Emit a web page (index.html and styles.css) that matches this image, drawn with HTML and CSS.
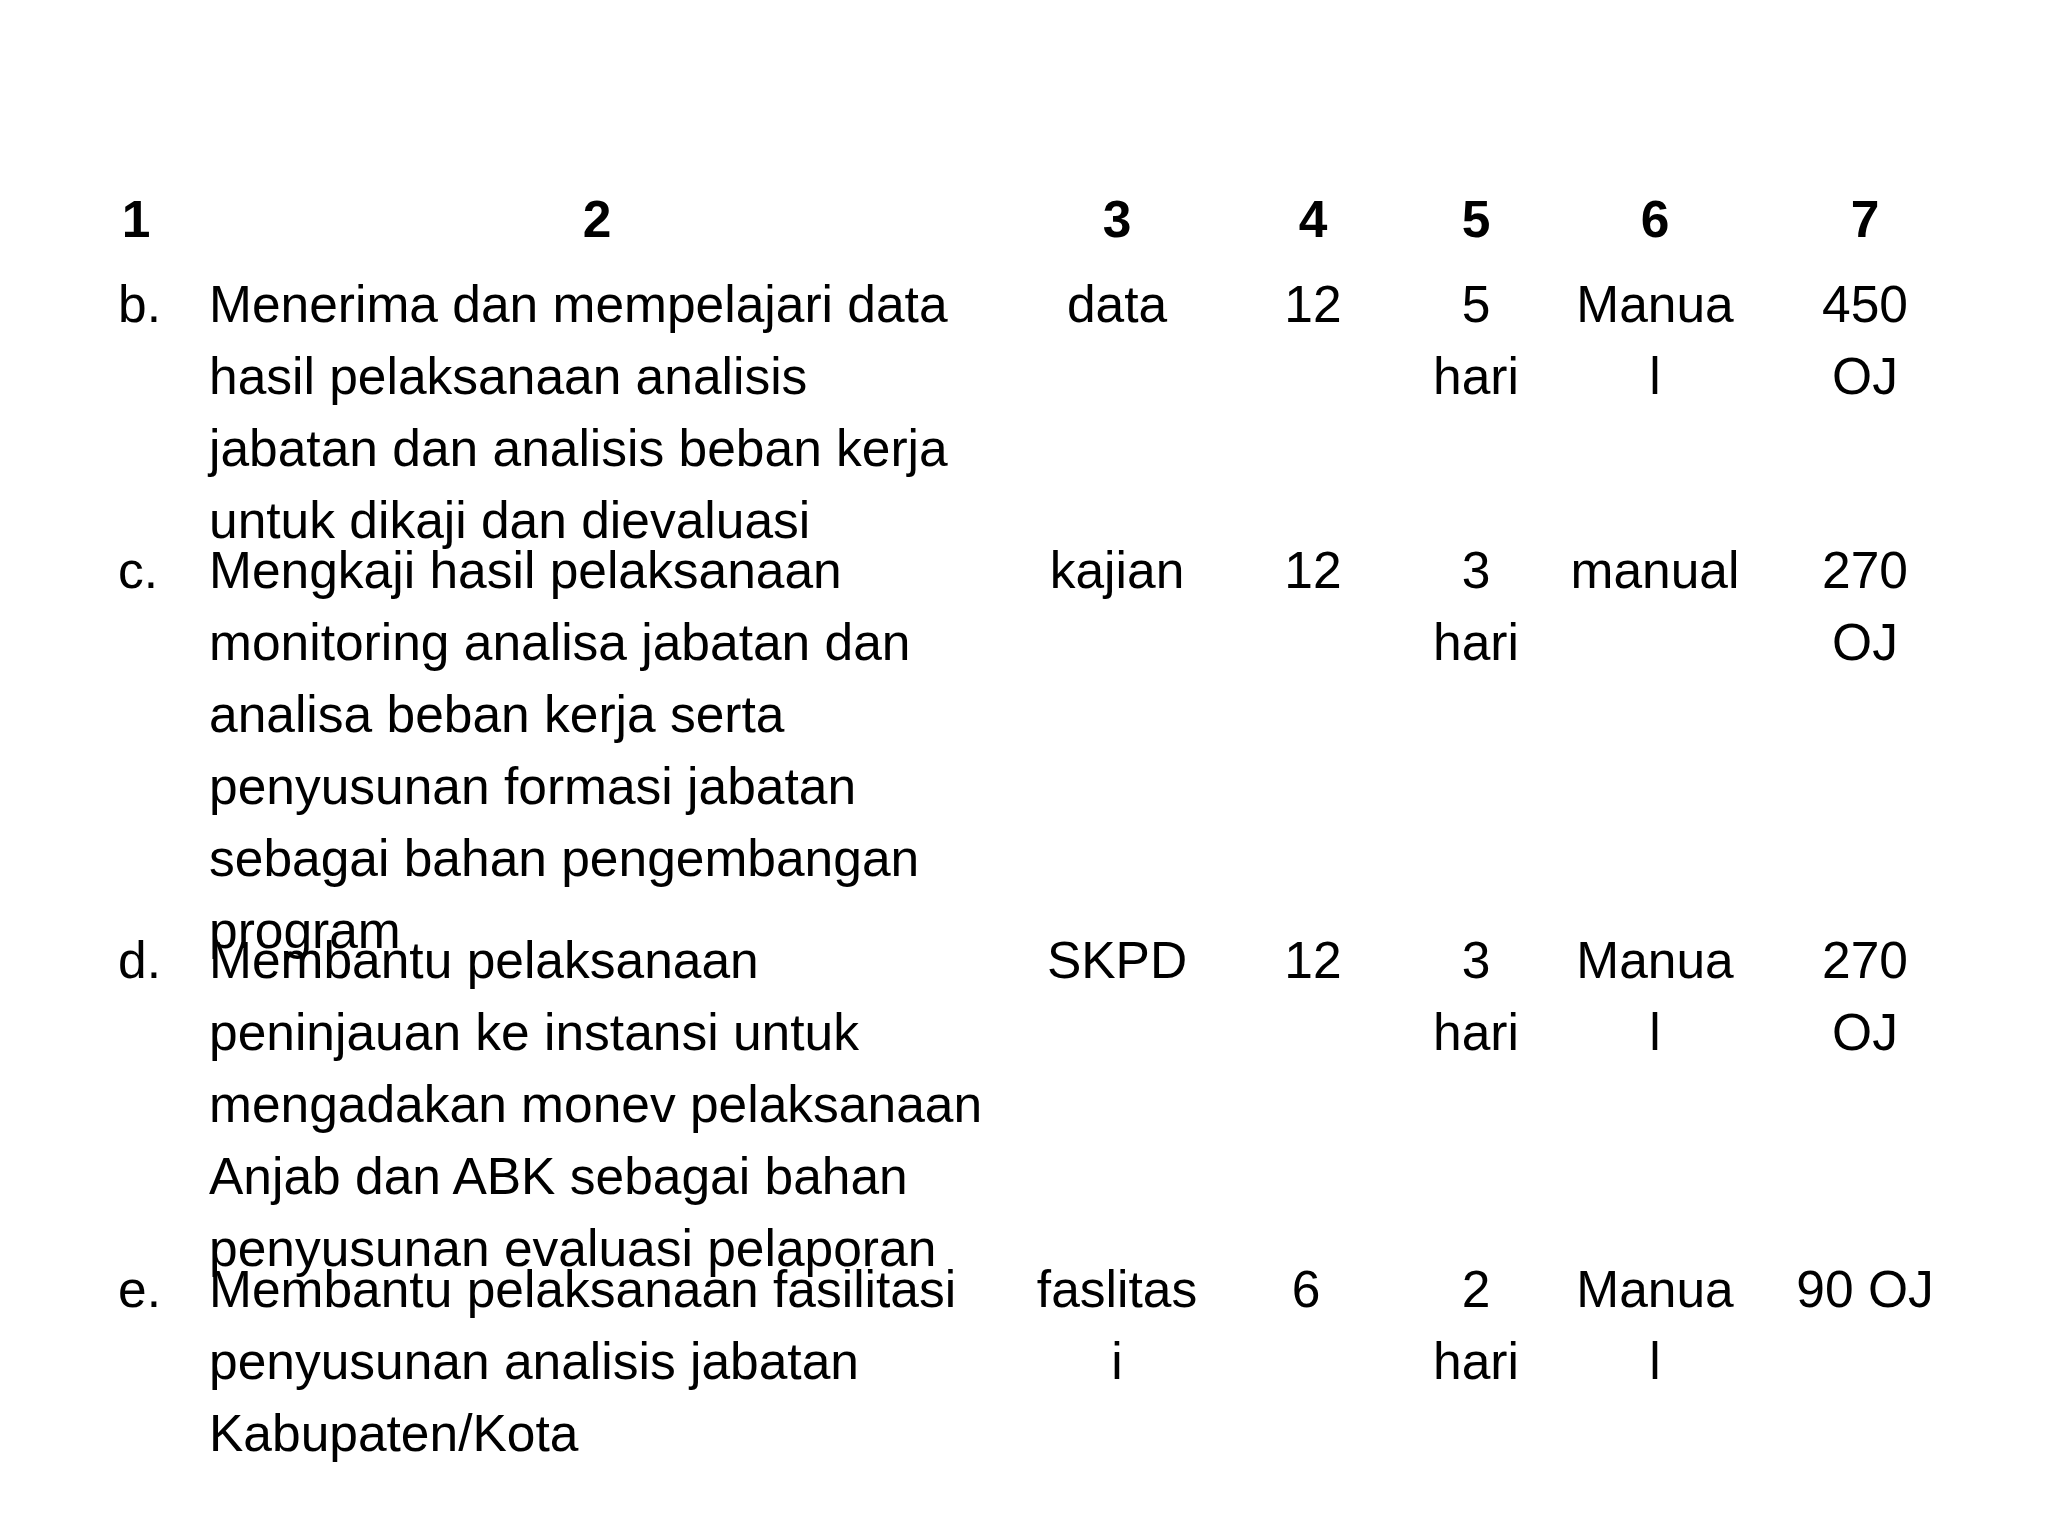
FILE: index.html
```html
<!DOCTYPE html>
<html lang="id">
<head>
<meta charset="utf-8">
<title>Tabel Kegiatan</title>
<link rel="stylesheet" href="styles.css">
</head>
<body>
<main class="slide">
  <div class="grid">
    <div class="cell head">1</div>
    <div class="cell head">2</div>
    <div class="cell head">3</div>
    <div class="cell head">4</div>
    <div class="cell head">5</div>
    <div class="cell head">6</div>
    <div class="cell head">7</div>

    <div class="cell label">b.</div>
    <div class="cell desc">Menerima dan mempelajari data<br>hasil pelaksanaan analisis<br>jabatan dan analisis beban kerja<br>untuk dikaji dan dievaluasi</div>
    <div class="cell c">data</div>
    <div class="cell c">12</div>
    <div class="cell c">5<br>hari</div>
    <div class="cell c">Manua<br>l</div>
    <div class="cell c">450<br>OJ</div>

    <div class="cell label">c.</div>
    <div class="cell desc">Mengkaji hasil pelaksanaan<br>monitoring analisa jabatan dan<br>analisa beban kerja serta<br>penyusunan formasi jabatan<br>sebagai bahan pengembangan<br>program</div>
    <div class="cell c">kajian</div>
    <div class="cell c">12</div>
    <div class="cell c">3<br>hari</div>
    <div class="cell c">manual</div>
    <div class="cell c">270<br>OJ</div>

    <div class="cell label">d.</div>
    <div class="cell desc">Membantu pelaksanaan<br>peninjauan ke instansi untuk<br>mengadakan monev pelaksanaan<br>Anjab dan ABK sebagai bahan<br>penyusunan evaluasi pelaporan</div>
    <div class="cell c">SKPD</div>
    <div class="cell c">12</div>
    <div class="cell c">3<br>hari</div>
    <div class="cell c">Manua<br>l</div>
    <div class="cell c">270<br>OJ</div>

    <div class="cell label">e.</div>
    <div class="cell desc">Membantu pelaksanaan fasilitasi<br>penyusunan analisis jabatan<br>Kabupaten/Kota</div>
    <div class="cell c">faslitas<br>i</div>
    <div class="cell c six">6</div>
    <div class="cell c">2<br>hari</div>
    <div class="cell c">Manua<br>l</div>
    <div class="cell c">90 OJ</div>
  </div>
</main>
</body>
</html>
```
FILE: styles.css
```css
html, body {
  margin: 0;
  padding: 0;
  background: #ffffff;
}

body {
  width: 2048px;
  height: 1536px;
  overflow: hidden;
  color: #000000;
  font-family: "Liberation Sans", Arial, sans-serif;
}

.slide {
  padding: 183px 0 0 100px;
}

.grid {
  display: grid;
  grid-template-columns: 72px 850px 190px 202px 124px 234px 186px;
  grid-template-rows: 85px 266px 390px 329px auto;
}

.cell {
  font-size: 51.5px;
  line-height: 72px;
  white-space: nowrap;
  overflow: visible;
}

.head {
  font-weight: bold;
  text-align: center;
}

.label {
  padding-left: 18px;
}

.desc {
  padding-left: 37px;
}

.c {
  text-align: center;
}

.six {
  padding-right: 14px;
}
```
